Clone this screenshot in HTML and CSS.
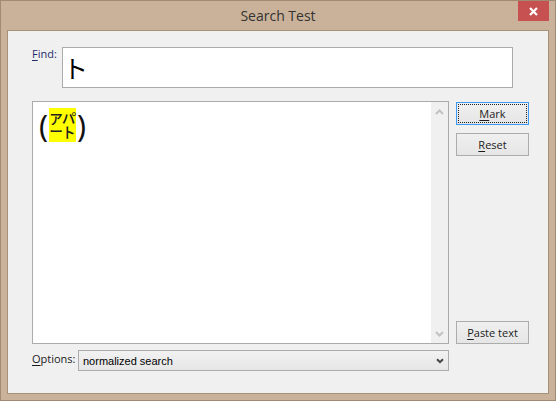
FILE: index.html
```html
<!DOCTYPE html>
<html>
<head>
<meta charset="utf-8">
<link rel="stylesheet" href="styles.css">
</head>
<body>
<div class="window">
  <div class="titlebar">
    <div class="title">Search Test</div>
    <div class="close">
      <svg width="9" height="9" viewBox="0 0 9 9"><path d="M1 1L8 8M8 1L1 8" stroke="#fff" stroke-width="2.2" fill="none"/></svg>
    </div>
  </div>
  <div class="client">
    <div class="find-row">
      <div class="lbl find-lbl"><u>F</u>ind:</div>
      <div class="find-input"><span class="find-text">ト</span></div>
    </div>
    <div class="main-row">
      <div class="textbox">
        <div class="text-content"><span class="paren">(</span><span class="hl">㌀</span><span class="paren">)</span></div>
        <div class="vscroll">
          <svg class="arrow" width="9" height="6" viewBox="0 0 9 6"><path d="M1 5L4.5 1.5L8 5" stroke="#c2c2c2" stroke-width="2" fill="none"/></svg>
          <svg class="arrow" width="9" height="6" viewBox="0 0 9 6"><path d="M1 1L4.5 4.5L8 1" stroke="#c2c2c2" stroke-width="2" fill="none"/></svg>
        </div>
      </div>
      <div class="buttons">
        <div class="btn focused"><span class="focus-ring"><u>M</u>ark</span></div>
        <div class="btn"><u>R</u>eset</div>
        <div class="spacer"></div>
        <div class="btn"><u>P</u>aste text</div>
      </div>
    </div>
    <div class="options-row">
      <div class="lbl opt-lbl"><u>O</u>ptions:</div>
      <div class="select">
        <span class="select-text">normalized search</span>
        <svg width="8" height="6" viewBox="0 0 8 6"><path d="M1 1.2L4 4.2L7 1.2" stroke="#444" stroke-width="2" fill="none"/></svg>
      </div>
    </div>
  </div>
</div>
</body>
</html>
```
FILE: styles.css
```css
html, body {
  margin: 0;
  padding: 0;
  background: #c9b299;
}
.window {
  box-sizing: border-box;
  width: 556px;
  height: 401px;
  border: 1px solid #a08a72;
  background: #c9b299;
  padding: 0 6px 6px 6px;
  display: flex;
  flex-direction: column;
  font-family: "Open Sans", "Noto Sans", sans-serif;
}
.titlebar {
  height: 29px;
  flex: none;
  display: grid;
  grid-template-columns: 1fr auto 1fr;
  margin: 0 -6px;
}
.title {
  grid-column: 2;
  font-size: 14px;
  color: #333;
  line-height: 29px;
}
.close {
  grid-column: 3;
  justify-self: end;
  align-self: start;
  width: 31px;
  height: 20px;
  margin-right: 6px;
  background: #c75050;
  display: flex;
  align-items: center;
  justify-content: center;
}
.client {
  flex: 1;
  border: 1px solid #a6927a;
  background: #f0f0f0;
  padding: 16px 19px 0 24px;
  display: flex;
  flex-direction: column;
}
.lbl {
  font-size: 11px;
  color: #1b1b1b;
}
.lbl u {
  text-decoration-thickness: 1px;
  text-underline-offset: 2px;
}
.find-lbl {
  width: 30px;
  color: #232b6b;
  line-height: 14px;
}
.find-row {
  display: flex;
  align-items: flex-start;
}
.find-input {
  box-sizing: border-box;
  width: 451px;
  height: 41px;
  background: #fff;
  border: 1px solid #ababab;
  padding: 4px 0 0 0;
}
.find-text {
  font-family: "Noto Sans CJK JP", sans-serif;
  font-size: 25px;
  line-height: 30px;
  color: #000;
  display: block;
}
.main-row {
  margin-top: 13px;
  height: 243px;
  display: flex;
  gap: 7px;
}
.textbox {
  box-sizing: border-box;
  width: 417px;
  height: 243px;
  background: #fff;
  border: 1px solid #ababab;
  display: flex;
}
.text-content {
  flex: 1;
  padding: 4px 0 0 6px;
  display: flex;
  align-items: flex-start;
}
.paren {
  font-family: "Noto Sans", sans-serif;
  font-weight: 400;
  font-size: 30px;
  line-height: 40px;
  color: #111;
}
.hl {
  display: inline-block;
  background: #ffff00;
  width: 27px;
  height: 34px;
  margin: 2px 1px 0 1px;
  font-family: "Noto Sans CJK JP", sans-serif;
  font-size: 27px;
  line-height: 34px;
  text-align: center;
  color: #222;
}
.vscroll {
  width: 17px;
  background: #f0f0f0;
  display: flex;
  flex-direction: column;
  justify-content: space-between;
  align-items: center;
  padding: 7px 0 6px 0;
}
.buttons {
  width: 73px;
  display: flex;
  flex-direction: column;
  gap: 8px;
  padding-top: 1px;
}
.spacer {
  flex: 1;
}
.btn {
  box-sizing: border-box;
  height: 23px;
  border: 1px solid #acacac;
  background: linear-gradient(#f0f0f0, #e5e5e5);
  font-size: 11px;
  color: #1b1b1b;
  display: flex;
  align-items: center;
  justify-content: center;
}
.btn u {
  text-underline-offset: 2px;
}
.focused {
  border-color: #3c9bf0;
  padding: 1px;
}
.focus-ring {
  box-sizing: border-box;
  width: 100%;
  height: 100%;
  border: 1px dotted #222;
  display: flex;
  align-items: center;
  justify-content: center;
}
.options-row {
  margin-top: 6px;
  display: flex;
  align-items: flex-start;
}
.opt-lbl {
  width: 46px;
  line-height: 14px;
  padding-top: 2px;
}
.select {
  box-sizing: border-box;
  width: 371px;
  height: 21px;
  border: 1px solid #acacac;
  background: linear-gradient(#f2f2f2, #e6e6e6);
  display: flex;
  align-items: center;
  justify-content: space-between;
  padding: 0 4px 0 4px;
}
.select-text {
  font-family: "Liberation Sans", Arial, sans-serif;
  font-size: 11px;
  color: #000;
}
```
